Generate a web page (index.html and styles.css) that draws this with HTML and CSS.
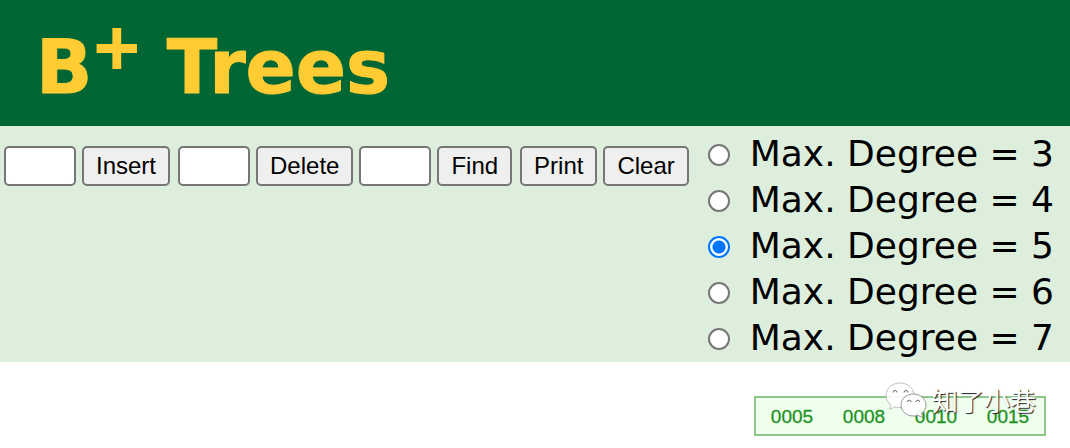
FILE: index.html
```html
<!DOCTYPE html>
<html lang="en">
<head>
<meta charset="utf-8">
<title>B+ Trees</title>
<link rel="stylesheet" href="styles.css">
</head>
<body>
<header class="banner">
  <h1 class="title">B<sup class="plus">+</sup> Trees</h1>
</header>
<form class="controls">
  <div class="actions">
    <div class="group">
      <input class="field" type="text" aria-label="Value to insert">
      <button class="btn" type="button">Insert</button>
    </div>
    <div class="group">
      <input class="field" type="text" aria-label="Value to delete">
      <button class="btn" type="button">Delete</button>
      <input class="field" type="text" aria-label="Value to find">
      <button class="btn" type="button">Find</button>
    </div>
    <div class="group">
      <button class="btn" type="button">Print</button>
      <button class="btn" type="button">Clear</button>
    </div>
  </div>
  <div class="degrees" role="radiogroup" aria-label="Max. Degree">
    <label class="degree"><input class="radio" type="radio" name="degree">Max. Degree = 3</label>
    <label class="degree"><input class="radio" type="radio" name="degree">Max. Degree = 4</label>
    <label class="degree"><input class="radio" type="radio" name="degree" checked>Max. Degree = 5</label>
    <label class="degree"><input class="radio" type="radio" name="degree">Max. Degree = 6</label>
    <label class="degree"><input class="radio" type="radio" name="degree">Max. Degree = 7</label>
  </div>
</form>
<main class="stage">
  <div class="node">
    <span class="key">0005</span>
    <span class="key">0008</span>
    <span class="key">0010</span>
    <span class="key">0015</span>
    <div class="watermark" lang="zh">
      <svg class="logo" viewBox="0 0 42 36" aria-hidden="true">
        <g class="bubbles">
          <path class="back" d="M15 1C7 1 1 6.500 1 13.500c0 4 2 7.300 5 9.500l-1.500 4.500 5.500-2.700c1.600.5 3.200.7 5 .7 8 0 14-5.300 14-12S23 1 15 1z"/>
          <path class="front" d="M28.500 12C21.500 12 16 16.800 16 23s5.500 11 12.500 11c1.500 0 3-.2 4.300-.6l5 2.100-1.200-4c2.700-2 4.400-5 4.400-8.500 0-6.200-5.500-11-12.500-11z"/>
        </g>
        <g class="eyes">
          <path d="M8 10.500a2 2 0 1 1 4 0M19 10.500a2 2 0 1 1 4 0M22.500 20a1.800 1.800 0 1 1 3.600 0M31 20a1.800 1.800 0 1 1 3.600 0"/>
        </g>
      </svg>
      <span class="brand">知了小巷</span>
    </div>
  </div>
</main>
</body>
</html>
```
FILE: styles.css
```css
* {
  box-sizing: border-box;
}

body {
  margin: 0;
  background: #fff;
  color: #000;
  font-family: Verdana, "DejaVu Sans", sans-serif;
}

.banner {
  padding: 25px 36px 17px;
  background: #006633;
}

.title {
  margin: 0;
  color: #ffcc33;
  font-size: 74px;
  line-height: 84px;
  -webkit-text-stroke: 1px #ffcc33;
}

.plus {
  font-size: 58px;
  font-weight: normal;
  -webkit-text-stroke: 4px #ffcc33;
  line-height: 0;
}

.controls {
  display: flex;
  justify-content: space-between;
  align-items: flex-start;
  padding: 5px 16px 1px 4px;
  background: #ddeedd;
}

.actions {
  display: flex;
  gap: 8px;
  padding-top: 15px;
}

.group {
  display: flex;
  gap: 6px;
}

.field,
.btn {
  height: 40px;
  border: 2px solid #767676;
  border-radius: 5px;
  font-family: Arial, "Liberation Sans", sans-serif;
  font-size: 24px;
}

.field {
  width: 72px;
  padding: 2px 4px;
  background: #fff;
}

.btn {
  padding: 0 12px;
  background: #efefef;
  color: #000;
}

.degrees {
  display: flex;
  flex-direction: column;
}

.degree {
  display: flex;
  align-items: center;
  gap: 20px;
  font-size: 36px;
  line-height: 46px;
  white-space: nowrap;
}

.radio {
  appearance: none;
  width: 22px;
  height: 22px;
  margin: 2px 0 0;
  border: 2px solid #767676;
  border-radius: 50%;
  background: #fff;
}

.radio:checked {
  border-color: #0075ff;
  background: radial-gradient(circle, #0075ff 6px, #fff 7px);
}

.stage {
  display: flex;
  justify-content: flex-end;
  padding: 34px 24px 12px;
}

.node {
  position: relative;
  display: flex;
  border: 2px solid #8fc78f;
  background: #eeffee;
}

.key {
  width: 72px;
  height: 36px;
  color: #1f921f;
  font-family: Arial, "Liberation Sans", sans-serif;
  font-size: 19px;
  line-height: 38px;
  text-align: center;
  -webkit-text-stroke: 0.3px #1f921f;
}

.watermark {
  position: absolute;
  top: -16px;
  right: 8px;
  display: flex;
  align-items: center;
  gap: 5px;
}

.logo {
  width: 42px;
  height: 36px;
  overflow: visible;
}

.bubbles {
  fill: #fff;
  fill-opacity: 0.9;
  stroke-width: 0.6;
}

.back {
  stroke: #999;
}

.front {
  stroke: #555;
}

.eyes {
  fill: none;
  stroke: #666;
  stroke-width: 1;
}

.brand {
  color: #fff;
  font-family: "Noto Sans CJK SC", sans-serif;
  font-size: 26px;
  line-height: 36px;
  text-shadow: 1px 1px 1px #222;
}
```
